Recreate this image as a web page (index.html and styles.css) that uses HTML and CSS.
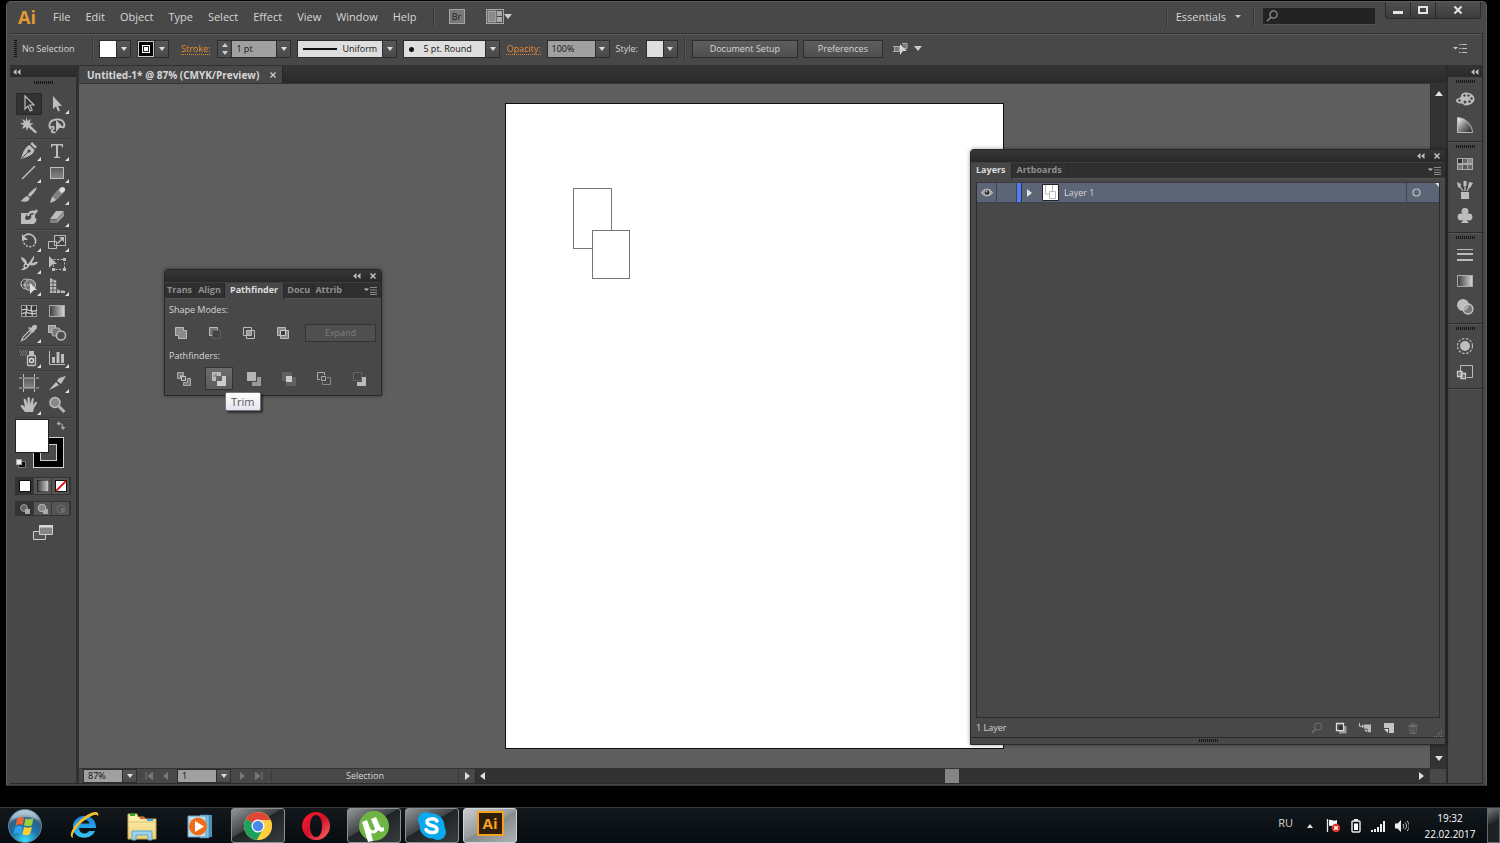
FILE: index.html
```html
<!DOCTYPE html>
<html lang="en">
<head>
    <meta charset="UTF-8">
    <meta name="viewport" content="width=device-width, initial-scale=1.0">
    <title>Untitled-1* @ 87% (CMYK/Preview)</title>
    <link rel="stylesheet" href="styles.css">
</head>
<body>
    <!-- shared gradients -->
    <svg class="defs" aria-hidden="true">
        <defs>
            <linearGradient id="fade" x1="0" y1="0" x2="1" y2="0"><stop offset="0" stop-color="#3a3a3a"/><stop offset="1" stop-color="#d6d6d6"/></linearGradient>
            <linearGradient id="box" x1="0" y1="0" x2="0" y2="1"><stop offset="0" stop-color="#5c5c5c"/><stop offset="1" stop-color="#868686"/></linearGradient>
            <linearGradient id="guide" x1="0" y1="0" x2="1" y2="1"><stop offset=".1" stop-color="#e0e0e0"/><stop offset=".55" stop-color="#777"/><stop offset="1" stop-color="#222"/></linearGradient>
            <radialGradient id="orb" cx=".5" cy=".95" r=".9"><stop offset="0" stop-color="#3fe0ff"/><stop offset=".45" stop-color="#1b78b0"/><stop offset=".75" stop-color="#2f5f85"/><stop offset="1" stop-color="#b4ccdb"/></radialGradient>
            <linearGradient id="ie" x1="0" y1="0" x2="0" y2="1"><stop offset="0" stop-color="#1583dd"/><stop offset="1" stop-color="#36c4f7"/></linearGradient>
            <linearGradient id="folder" x1="0" y1="0" x2="0" y2="1"><stop offset="0" stop-color="#fff3b8"/><stop offset="1" stop-color="#edcf72"/></linearGradient>
            <linearGradient id="opera" x1="0" y1="0" x2="1" y2="1"><stop offset="0" stop-color="#ff1b2d"/><stop offset=".5" stop-color="#d3122a"/><stop offset="1" stop-color="#ff6a6a"/></linearGradient>
        </defs>
    </svg>

    <div class="window">
        <header class="titlebar">
            <span class="logo">Ai</span>
            <nav class="menu">
                <a href="#">File</a>
                <a href="#">Edit</a>
                <a href="#">Object</a>
                <a href="#">Type</a>
                <a href="#">Select</a>
                <a href="#">Effect</a>
                <a href="#">View</a>
                <a href="#">Window</a>
                <a href="#">Help</a>
            </nav>
            <span class="line"></span>
            <button class="bridge" aria-label="Bridge">Br</button>
            <button class="arrange" aria-label="Arrange documents">
                <svg width="18" height="15" viewBox="0 0 18 15"><rect x=".5" y=".5" width="17" height="14" fill="#474747" stroke="#a9a9a9"/><rect x="2" y="2" width="8" height="11" fill="#8a8a8a" stroke="#ccc" stroke-width=".6"/><path d="M11 2h5v5h-5zM11 8h5v5h-5z" fill="#aaa"/></svg>
                <i class="caret"></i>
            </button>
            <div class="title-right">
                <span class="line"></span>
                <button class="essentials">Essentials <i class="caret small"></i></button>
                <span class="line"></span>
                <div class="search">
                    <svg width="12" height="12" viewBox="0 0 12 12" fill="none" stroke="#8e8e8e" stroke-width="1.3"><circle cx="7.5" cy="4.5" r="3.6"/><path d="M5 7.2L1 11"/></svg>
                    <input type="text" aria-label="Search">
                </div>
                <div class="win-buttons">
                    <button aria-label="Minimize"><svg width="10" height="10"><path d="M0 6h10v3h-10z" fill="#e4e4e4"/></svg></button>
                    <button aria-label="Maximize"><svg width="10" height="10"><path d="M1 2h8v6h-8z" fill="none" stroke="#e4e4e4" stroke-width="2"/></svg></button>
                    <button class="close" aria-label="Close"><svg width="10" height="10"><path d="M1.500 1.500l7 7M8.500 1.500l-7 7" stroke="#e4e4e4" stroke-width="2"/></svg></button>
                </div>
            </div>
        </header>

        <section class="control-bar">
            <span class="grip-v"></span>
            <span class="state">No Selection</span>
            <span class="line"></span>
            <div class="combo fill"><span class="chip white"></span><button class="drop" aria-label="Fill"></button></div>
            <div class="combo"><span class="chip ring"></span><button class="drop" aria-label="Stroke colour"></button></div>
            <a class="hot stroke-link" href="#">Stroke:</a>
            <div class="combo weight">
                <div class="spin"><button class="up" aria-label="Increase"></button><button class="down" aria-label="Decrease"></button></div>
                <input type="text" value="1 pt" aria-label="Stroke weight">
                <button class="drop" aria-label="Weights"></button>
            </div>
            <label class="combo profile"><span class="sample"></span><select aria-label="Profile"><option>Uniform</option></select><span class="drop"></span></label>
            <label class="combo brush"><span class="dot"></span><select aria-label="Brush"><option>5 pt. Round</option></select><span class="drop"></span></label>
            <a class="hot" href="#">Opacity:</a>
            <div class="combo opacity"><input type="text" value="100%" aria-label="Opacity"><button class="drop" aria-label="Opacity values"></button></div>
            <span class="style-label">Style:</span>
            <div class="combo"><span class="chip pale"></span><button class="drop" aria-label="Style"></button></div>
            <span class="line"></span>
            <button class="btn setup">Document Setup</button>
            <button class="btn prefs">Preferences</button>
            <button class="similar" aria-label="Select similar">
                <svg width="16" height="14" viewBox="0 0 16 14"><path d="M0 4.500h1M0 9.500h1" stroke="#bbb"/><rect x="1.500" y="4.500" width="5" height="5" fill="#777" stroke="#aaa"/><path d="M9 1.500h5v5h-3" fill="#777" stroke="#aaa"/><path d="M7 2l7 7H10l-3 4z" fill="#d4d4d4"/></svg>
                <i class="caret"></i>
            </button>
            <button class="bar-menu" aria-label="Menu">
                <svg width="14" height="9" viewBox="0 0 14 9"><path d="M0 3h5L2.500 5.500z" fill="#ccc"/><path d="M6 .5h1.500M6 4.500h1.500M6 8.500h1.500M8.500 .5H14M8.500 4.500H14M8.500 8.500H14" stroke="#bbb"/></svg>
            </button>
        </section>

        <div class="workspace">
            <aside class="tools">
                <div class="strip"><svg width="8" height="6"><path d="M3.500 0v6L0 3zM7.500 0v6L4 3z" fill="#bdbdbd"/></svg></div>
                <span class="grip"></span>
                <div class="tool-group">
                    <button class="active" aria-label="Selection"><svg viewBox="0 0 20 20"><path d="M6 2l9 9H10.800l2.400 5-2 1-2.300-5L6 15z" fill="#333" stroke="#bbb" stroke-width="1.200"/></svg></button>
                    <button class="more" aria-label="Direct Selection"><svg viewBox="0 0 20 20"><path d="M6 2l9 10H11l2 4.500-2 1-2-5L6 15z"/></svg></button>
                    <button aria-label="Magic Wand"><svg viewBox="0 0 20 20"><path d="M7.500 1l1 4 3.500-2-1.500 4 4.500.5-3.800 1.700L18 16l-1.500 1.500L9.200 11.200 8 15l-1.200-4L3 13l1.700-4L1 7.500 5 6.500 3 3l3.800 2z"/></svg></button>
                    <button aria-label="Lasso"><svg viewBox="0 0 20 20"><path d="M4 13c-3-3-2-9 5.500-9.500S19 9 16 12M4 11c3-1 4 1 1.500 3s1 3 3 2" fill="none" stroke="#bdbdbd" stroke-width="1.800"/><path d="M9 4l8 8H12.500l-3.500 4z"/></svg></button>
                </div>
                <div class="tool-group">
                    <button class="more" aria-label="Pen"><svg viewBox="0 0 20 20"><path d="M13 1l5 5-2 1.500L11.500 3zM10.500 4l5 5C14.500 13.500 10 15.500 2 18 4 10 6.500 6 10.500 4z"/><path d="M3 17l6-6" stroke="#444"/><circle cx="10" cy="10" r="1.600" fill="#444"/></svg></button>
                    <button class="more" aria-label="Type"><svg viewBox="0 0 20 20"><path d="M4 3h12v3.500h-1L14.500 4.500H11v11l2 .5v1H7v-1l2-.5v-11H5.500L5 6.500H4z"/></svg></button>
                    <button class="more" aria-label="Line Segment"><svg viewBox="0 0 20 20"><path d="M3 16L16 3" stroke="#bdbdbd" stroke-width="1.400"/></svg></button>
                    <button class="more" aria-label="Rectangle"><svg viewBox="0 0 20 20"><rect x="3.500" y="4.500" width="13" height="11" style="fill:url(#box)" stroke="#bdbdbd"/></svg></button>
                    <button aria-label="Paintbrush"><svg viewBox="0 0 20 20"><path d="M18 2c-4 2-7 5-9 8l2 2c3-3 6-6 7-10zM8.500 11l2 2C10 17 6 17.500 1.500 16c2-.5 3.500-4.500 7-5z"/></svg></button>
                    <button class="more" aria-label="Pencil"><svg viewBox="0 0 20 20"><path d="M13 3l4 4-9 9-5 2 1.500-5z"/><path d="M11 5l4 4-6 6-4-4z" fill="#808080"/><circle cx="15.500" cy="4.500" r="2.600" fill="#ddd"/></svg></button>
                    <button aria-label="Blob Brush"><svg viewBox="0 0 20 20"><path d="M2 6h7c-3 3-4 7-1 7 4 0 5-3 4-5l4-1v4c3 0 1 6-2 6H2z"/><path d="M18 3l-3 4M16 5c-4-1-7 1-7 4" fill="none" stroke="#bdbdbd" stroke-width="2.500"/></svg></button>
                    <button class="more" aria-label="Eraser"><svg viewBox="0 0 20 20"><path d="M9 4h8l-7 8H3z"/><path d="M17 5v4l-7 7v-4z" fill="#999"/><path d="M3 12.500h7V16H3z" fill="#808080"/></svg></button>
                </div>
                <div class="tool-group">
                    <button class="more" aria-label="Rotate"><svg viewBox="0 0 20 20"><path d="M5 4a7 7 0 0 1 11 8" fill="none" stroke="#c0c0c0" stroke-width="1.500"/><path d="M15.500 13A7 7 0 0 1 4 8" fill="none" stroke="#c0c0c0" stroke-width="1.500" stroke-dasharray="2 1.500"/><path d="M3 2v6h6z"/></svg></button>
                    <button class="more" aria-label="Scale"><svg viewBox="0 0 20 20"><path d="M7.500 3.500h11v10h-11z" fill="#444" stroke="#bdbdbd"/><path d="M1.500 9.500h8v7h-8z" fill="none" stroke="#bdbdbd"/><path d="M10 11l4-4-2-2h5v5l-2-2-4 4z"/></svg></button>
                    <button class="more" aria-label="Width"><svg viewBox="0 0 20 20"><path d="M2 3c4 1 6 4 6 7 2 1 5-7 7-8 1 3-2 5-2 7 2 0 3-2 6-1-2 4-6 4-8 3-3 3-5 6-9 5 2-2 4-3 4-6C5 8 2 6 2 3z"/><circle cx="7" cy="12" r="2" fill="#444" stroke="#eee"/></svg></button>
                    <button aria-label="Free Transform"><svg viewBox="0 0 20 20"><path d="M6.500 5.500h11v10h-11z" fill="none" stroke="#bdbdbd" stroke-dasharray="2 1.500"/><path d="M16 4h3v3h-3zM16 14h3v3h-3zM5 14h3v3H5z"/><path d="M2 2l8 8H6l-4 4z"/></svg></button>
                    <button class="more" aria-label="Shape Builder"><svg viewBox="0 0 20 20"><circle cx="7" cy="8" r="5" fill="none" stroke="#bdbdbd"/><circle cx="11" cy="9" r="5.500" fill="#777" stroke="#bdbdbd"/><path d="M2 9h11" stroke="#ddd" stroke-dasharray="1 1"/><path d="M11 7l7 7h-3l-4 4z" fill="#ddd"/></svg></button>
                    <button class="more" aria-label="Perspective Grid"><svg viewBox="0 0 20 20"><path d="M3 2l7 3v8l8 2v2H3z"/><path d="M6 3v14M9.500 4v13M13.500 13v4M3 7h7M3 10.500h7M3 14h13" stroke="#4a4a4a" stroke-width=".8"/></svg></button>
                </div>
                <div class="tool-group">
                    <button aria-label="Mesh"><svg viewBox="0 0 20 20"><rect x="2.500" y="4.500" width="15" height="11" fill="#333" stroke="#999"/><path d="M3 9c5-3 10 4 15 0M3 13c5-4 9 2 14-1M7 5c3 4-2 7 0 10M13 5c-3 3 2 7 0 10" fill="none" stroke="#ccc" stroke-width="1.300"/></svg></button>
                    <button aria-label="Gradient"><svg viewBox="0 0 20 20"><rect x="2.500" y="4.500" width="15" height="11" style="fill:url(#fade)" stroke="#aaa"/></svg></button>
                    <button class="more" aria-label="Eyedropper"><svg viewBox="0 0 20 20"><path d="M12 5c2-4 6-4 6-1s-3 3-3 5l-1 1-5-5 1-1z"/><path d="M10.500 7.500l2 2L6 16l-3.500 1.500L4 14z" fill="none" stroke="#bdbdbd" stroke-width="1.200"/></svg></button>
                    <button aria-label="Blend"><svg viewBox="0 0 20 20"><rect x="1.500" y="2.500" width="7" height="7" fill="#999" stroke="#bbb"/><rect x="5" y="5" width="8" height="8" rx="2" fill="#777" stroke="#bbb"/><circle cx="14" cy="12.500" r="4.500" fill="#4c4c4c" stroke="#bbb" stroke-width="1.500"/></svg></button>
                </div>
                <div class="tool-group">
                    <button class="more" aria-label="Symbol Sprayer"><svg viewBox="0 0 20 20"><rect x="8.500" y="7.500" width="8" height="10" rx="1" fill="#555" stroke="#c0c0c0" stroke-width="1.300"/><path d="M10 3h5v4h-5z"/><circle cx="12.500" cy="12.500" r="2" fill="none" stroke="#ddd" stroke-width="1.300"/><path d="M1 3h8M2 5h7M1 7h6" stroke="#aaa" stroke-dasharray="1 1.500"/></svg></button>
                    <button class="more" aria-label="Column Graph"><svg viewBox="0 0 20 20"><path d="M2.500 3v13.500H18" fill="none" stroke="#bdbdbd"/><path d="M5 9h3v6H5zM9.500 4h3v11h-3zM14 6h3v9h-3z"/></svg></button>
                </div>
                <div class="tool-group">
                    <button aria-label="Artboard"><svg viewBox="0 0 20 20"><rect x="4.500" y="5" width="11" height="10" style="fill:url(#box)" stroke="#bdbdbd"/><path d="M4.500 1v3M15.500 1v3M4.500 16v3M15.500 16v3M0 5h3M17 5h3M0 15h3M17 15h3" stroke="#bdbdbd"/></svg></button>
                    <button class="more" aria-label="Slice"><svg viewBox="0 0 20 20"><path d="M19 3l-7 2-2 3 4 3zM9 9l3 3c-3 2-6 3-10 5z"/></svg></button>
                    <button class="more" aria-label="Hand"><svg viewBox="0 0 20 20"><path d="M6 17C4 14 1 12 2 10c2-.5 3 1 4 2L4.500 4.500c1-1.500 2-.5 2.500.5l1.500 4V3c.5-1.500 2-1.500 2.300 0l.5 6L13 3.500c1-1 2-.5 1.800.7L14 10l2.500-3c1.500-.6 2 .5 1.200 1.800L15 13l-1 4z"/></svg></button>
                    <button aria-label="Zoom"><svg viewBox="0 0 20 20"><circle cx="8" cy="7.500" r="5" fill="#888" stroke="#c0c0c0" stroke-width="1.500"/><path d="M12 11.500l5.500 5.500" stroke="#b5b5b5" stroke-width="3"/></svg></button>
                </div>
                <svg class="swatches" width="52" height="52" viewBox="0 0 52 52">
                    <rect x="18.500" y="18.500" width="30" height="30" fill="#000" stroke="#d0d0d0"/>
                    <rect x="25.500" y="25.500" width="16" height="16" fill="#4a4a4a" stroke="#d0d0d0"/>
                    <rect x=".5" y=".5" width="33" height="33" fill="#fff" stroke="#222"/>
                    <path d="M44 4.500c3 0 4 1 4 4" fill="none" stroke="#aaa" stroke-width="1.200"/><path d="M41.500 4.500l3-2.500v5zM45.500 8h5L48 11z" fill="#aaa"/>
                    <path d="M3.500 42.500h7v6h-7z" fill="#111" stroke="#777"/><path d="M1.500 40.500h5v5h-5z" fill="#eee" stroke="#aaa"/>
                </svg>
                <div class="modes">
                    <button class="on" aria-label="Color"><svg width="12" height="12"><path d="M0 0h12v12H0z" fill="#111"/><path d="M1 1h10v10H1z" fill="#fff"/></svg></button>
                    <button aria-label="Gradient fill"><svg width="12" height="12"><rect width="12" height="12" style="fill:url(#fade)" stroke="#111"/></svg></button>
                    <button aria-label="None"><svg width="12" height="12"><path d="M0 0h12v12H0z" fill="#111"/><path d="M1 1h10v10H1z" fill="#fff"/><path d="M1 11L11 1" stroke="#e8131b" stroke-width="1.800"/></svg></button>
                </div>
                <div class="modes draw">
                    <button class="on" aria-label="Draw Normal"><svg width="12" height="12"><circle cx="5" cy="5" r="3.500" fill="#666" stroke="#999"/><path d="M6 6h5v5H6z" fill="#aaa"/></svg></button>
                    <button aria-label="Draw Behind"><svg width="12" height="12"><path d="M6 6h5v5H6z" fill="#aaa"/><circle cx="5" cy="5" r="3.800" fill="#888" stroke="#bbb"/></svg></button>
                    <button aria-label="Draw Inside"><svg width="12" height="12"><circle cx="6" cy="6" r="4" fill="none" stroke="#6c6c6c"/><path d="M6 5h3v4H6z" fill="#6c6c6c"/></svg></button>
                </div>
                <button class="screen-mode" aria-label="Screen Mode"><svg width="20" height="15" viewBox="0 0 20 15"><path d="M.5 6.500h12v8H.5z" fill="#555" stroke="#ccc"/><path d="M6.500 .5h13v9h-13z" fill="#858585" stroke="#ccc"/><path d="M6 1.500h14" stroke="#ddd" stroke-width="2"/></svg></button>
            </aside>

            <main class="document">
                <div class="doc-tabs">
                    <div class="doc-tab">Untitled-1* @ 87% (CMYK/Preview) <button aria-label="Close tab"><svg width="6" height="6"><path d="M.5 .5l5 5M5.500 .5l-5 5" stroke="#ccc" stroke-width="1.300"/></svg></button></div>
                </div>
                <div class="stage">
                    <div class="canvas">
                        <div class="artboard">
                            <svg class="art" width="58" height="92" viewBox="0 0 58 92"><rect x=".5" y=".5" width="38" height="60" fill="#fff" stroke="#777"/><rect x="19.500" y="42.500" width="37" height="48" fill="#fff" stroke="#777"/></svg>
                        </div>
                    </div>
                    <div class="v-scroll"><i class="tri up"></i><i class="tri down"></i></div>
                </div>
                <footer class="status">
                    <div class="combo zoom"><input type="text" value="87%" aria-label="Zoom level"><button class="drop" aria-label="Zoom values"></button></div>
                    <div class="nav">
                        <button aria-label="First"><svg width="8" height="8"><path d="M1 0v8M8 0v8L3 4z" fill="#777" stroke="#777"/></svg></button>
                        <button aria-label="Previous"><svg width="8" height="8"><path d="M7 0v8L2 4z" fill="#777"/></svg></button>
                    </div>
                    <div class="combo zoom"><input type="text" value="1" aria-label="Artboard number"><button class="drop" aria-label="Artboards"></button></div>
                    <div class="nav">
                        <button aria-label="Next"><svg width="8" height="8"><path d="M1 0v8L6 4z" fill="#777"/></svg></button>
                        <button aria-label="Last"><svg width="8" height="8"><path d="M0 0v8L5 4zM7 0v8" fill="#777" stroke="#777"/></svg></button>
                    </div>
                    <div class="status-text">Selection</div>
                    <button class="status-more" aria-label="Show"><i class="tri right"></i></button>
                    <div class="h-scroll"><i class="tri left"></i><span class="thumb"></span><i class="tri right"></i></div>
                    <span class="corner"></span>
                </footer>

                <section class="panel pathfinder">
                    <div class="panel-head">
                        <button aria-label="Collapse"><svg width="8" height="6"><path d="M3.500 0v6L0 3zM7.500 0v6L4 3z" fill="#bdbdbd"/></svg></button>
                        <button aria-label="Close panel"><svg width="6" height="6"><path d="M.5 .5l5 5M5.500 .5l-5 5" stroke="#ccc" stroke-width="1.300"/></svg></button>
                    </div>
                    <div class="panel-tabs">
                        <button class="cut">Trans</button>
                        <button class="cut">Align</button>
                        <button class="open">Pathfinder</button>
                        <button class="cut">Docu</button>
                        <button class="cut">Attrib</button>
                        <button class="panel-menu" aria-label="Panel menu"><svg width="13" height="8"><path d="M0 1.500h5L2.500 4z" fill="#bbb"/><path d="M6 .5h7M6 3h7M6 5.500h7M6 7.500h7" stroke="#888"/></svg></button>
                    </div>
                    <div class="panel-body">
                        <h3>Shape Modes:</h3>
                        <div class="shape-row">
                            <button aria-label="Unite"><svg viewBox="0 0 14 14"><path d="M1.500 1.500h8v3h3v8h-8v-3h-3z" fill="#8a8a8a" stroke="#bbb"/></svg></button>
                            <button aria-label="Minus Front"><svg viewBox="0 0 14 14"><path d="M1.500 1.500h8v3h-5v5h-3z" fill="#777" stroke="#bbb"/><path d="M4.500 4.500h8v8h-8z" fill="#444" stroke="#5f5f5f"/></svg></button>
                            <button aria-label="Intersect"><svg viewBox="0 0 14 14"><path d="M1.500 1.500h8v8h-8zM4.500 4.500h8v8h-8z" fill="none" stroke="#bbb"/><path d="M5 5h4v4H5z" fill="#999"/></svg></button>
                            <button aria-label="Exclude"><svg viewBox="0 0 14 14"><path d="M1.500 1.500h8v8h-8zM4.500 4.500h8v8h-8z" fill="#888" stroke="#bbb"/><path d="M4.500 4.500h5v5h-5z" fill="#3c3c3c" stroke="#ccc"/></svg></button>
                            <button class="btn expand" disabled>Expand</button>
                        </div>
                        <h3>Pathfinders:</h3>
                        <div class="finder-row">
                            <button aria-label="Divide"><svg viewBox="0 0 14 14"><path d="M.5 .5h6v3h-3v3h-3zM13.500 13.500h-7v-3h4v-4h3z" fill="#777" stroke="#aaa"/><path d="M4.500 4.500h4v4h-4z" fill="#555" stroke="#ccc"/></svg></button>
                            <button class="active" aria-label="Trim"><svg viewBox="0 0 14 14"><path d="M0 0h9v4H4v5H0z" fill="#bbb"/><path d="M5 9h5V4h4v10H5z" fill="#ccc"/><path d="M4 1v3H1" fill="none" stroke="#777"/></svg></button>
                            <button aria-label="Merge"><svg viewBox="0 0 14 14"><path d="M0 0h9v9H0z" fill="#b5b5b5"/><path d="M5 10h5V5h4v9H5z" fill="#999"/></svg></button>
                            <button aria-label="Crop"><svg viewBox="0 0 14 14"><path d="M0 0h10v9H0zM4 5h10v9H4z" fill="#606060"/><path d="M4 4h6v6H4z" fill="#ccc"/></svg></button>
                            <button aria-label="Outline"><svg viewBox="0 0 14 14"><path d="M3 7.500H.5v-7h7V3M4.500 8.500v-4h4v4z" fill="none" stroke="#aaa"/><path d="M10 5.500h3.500v7h-8V10" fill="none" stroke="#888"/></svg></button>
                            <button aria-label="Minus Back"><svg viewBox="0 0 14 14"><path d="M1.500 .5h8v8h-8z" fill="#444" stroke="#666"/><path d="M5 10h5V5h4v9H5z" fill="#bbb"/></svg></button>
                        </div>
                    </div>
                    <div class="tooltip">Trim</div>
                </section>

                <section class="panel layers">
                    <div class="panel-head">
                        <button aria-label="Collapse"><svg width="8" height="6"><path d="M3.500 0v6L0 3zM7.500 0v6L4 3z" fill="#bdbdbd"/></svg></button>
                        <button aria-label="Close panel"><svg width="6" height="6"><path d="M.5 .5l5 5M5.500 .5l-5 5" stroke="#ccc" stroke-width="1.300"/></svg></button>
                    </div>
                    <div class="panel-tabs">
                        <button class="open">Layers</button>
                        <button>Artboards</button>
                        <button class="panel-menu" aria-label="Panel menu"><svg width="13" height="8"><path d="M0 1.500h5L2.500 4z" fill="#bbb"/><path d="M6 .5h7M6 3h7M6 5.500h7M6 7.500h7" stroke="#888"/></svg></button>
                    </div>
                    <div class="layer-list">
                        <div class="layer">
                            <button class="cell" aria-label="Visibility"><svg width="12" height="9" viewBox="0 0 12 9"><path d="M.5 4.500C3 0 9 0 11.500 4.500 9 9 3 9 .5 4.500z" fill="#a5a5a5" stroke="#c5c5c5"/><circle cx="6" cy="4.500" r="2.300" fill="#2c2c2c"/><circle cx="5.500" cy="3.800" r=".8" fill="#eee"/></svg></button>
                            <span class="cell"></span>
                            <span class="color"></span>
                            <i class="tri right"></i>
                            <svg class="thumbnail" width="17" height="17"><path d="M.5 .5h16v16H.5z" fill="#fff" stroke="#222"/><path d="M3.500 1v9h4M10.500 1v6M7.500 7.500h6v7h-6z" fill="none" stroke="#bbb"/></svg>
                            <span class="layer-name">Layer 1</span>
                            <button class="target" aria-label="Target"><svg width="9" height="9"><circle cx="4.500" cy="4.500" r="3.500" fill="none" stroke="#c0c0c0" stroke-width="1.200"/></svg></button>
                        </div>
                    </div>
                    <div class="layers-foot">
                        <span>1 Layer</span>
                        <div class="foot-icons">
                            <button aria-label="Locate Object"><svg viewBox="0 0 12 12"><circle cx="7" cy="4.500" r="3.600" fill="none" stroke="#707070"/><path d="M4.500 7L1 11" stroke="#707070" stroke-width="1.500"/></svg></button>
                            <button aria-label="Clipping Mask"><svg viewBox="0 0 12 12"><path d="M4 4h7.500v7.500H4z" fill="#999"/><path d="M1.500 1.500h7v7h-7z" fill="none" stroke="#ddd" stroke-width="1.300"/><path d="M4 4h4v4H4z" fill="#333"/></svg></button>
                            <button aria-label="New Sublayer"><svg viewBox="0 0 14 12"><path d="M6 2h8v9h-4V7H6z" fill="#bbb"/><path d="M6 8h3v3z" fill="#ddd"/><path d="M.5 0v4h5M3.500 2l2 2-2 2" fill="none" stroke="#ddd"/></svg></button>
                            <button aria-label="New Layer"><svg viewBox="0 0 12 12"><path d="M1 1h10v10H6V6H1z" fill="#c4c4c4"/><path d="M1 7h4v4z" fill="#ddd"/></svg></button>
                            <button aria-label="Delete"><svg viewBox="0 0 12 12"><path d="M1 3.500h10M4.500 3V1.500h3V3M2.500 4.500h7l-.5 7H3zM5 5v6M7 5v6" fill="none" stroke="#6a6a6a"/></svg></button>
                        </div>
                        <svg class="resize" width="9" height="9"><path d="M0 8.500h9M3 6.500h6M5 4.500h4M7 2.500h2" stroke="#777" stroke-dasharray="1 1"/></svg>
                    </div>
                    <div class="panel-edge"><span class="grip"></span></div>
                </section>
            </main>

            <aside class="dock">
                <div class="strip"><svg width="8" height="6"><path d="M3.500 0v6L0 3zM7.500 0v6L4 3z" fill="#bdbdbd"/></svg></div>
                <div class="dock-group">
                    <span class="grip"></span>
                    <button aria-label="Color"><svg viewBox="0 0 20 20"><path d="M11 3.500c5 0 8.500 3 8.500 6.500s-4 6.500-9 6.500c-2 0-2-2-4-2S1 14 1 11.500C1 9 6 9 6 7.500S7 3.500 11 3.500z"/><g fill="#444"><circle cx="4.500" cy="11.500" r="1.300"/><circle cx="9.500" cy="6.500" r="1.200"/><circle cx="13.500" cy="6.500" r="1.200"/><circle cx="16.500" cy="9.500" r="1.200"/><circle cx="14.500" cy="12.500" r="1.300"/><circle cx="10" cy="13" r="1.500"/></g></svg></button>
                    <button aria-label="Color Guide"><svg viewBox="0 0 20 20"><path d="M2.500 2.500C10 3 17 9 17.500 17.500h-15z" style="fill:url(#guide)" stroke="#bbb"/></svg></button>
                </div>
                <div class="dock-group">
                    <span class="grip"></span>
                    <button aria-label="Swatches"><svg viewBox="0 0 20 20"><path d="M2 4h16v12H2z" fill="#aaa"/><path d="M3 5h4v4H3z" fill="#333"/><path d="M8 5h4v4H8z" fill="#666"/><path d="M13 5h4v4h-4z" fill="#888"/><path d="M3 11h4v4H3z" fill="#777"/><path d="M8 11h4v4H8z" fill="#555"/><path d="M13 11h4v4h-4z" fill="#666"/></svg></button>
                    <button aria-label="Brushes"><svg viewBox="0 0 20 20"><path d="M6 12h8v7H6z"/><path d="M8 11L4 5M10 11V4M12 11l3-6" stroke="#bdbdbd" stroke-width="1.200"/><path d="M2 2l4 2-1 4-2-1zM8.500 1h3v5h-3zM14 2l4 1-3 5-2-1z"/></svg></button>
                    <button aria-label="Symbols"><svg viewBox="0 0 20 20"><circle cx="10" cy="5.500" r="3.400"/><circle cx="6" cy="11" r="3.400"/><circle cx="14" cy="11" r="3.400"/><path d="M9 8h2c0 5 1 7 3 9H6c2-2 3-4 3-9z"/></svg></button>
                </div>
                <div class="dock-group">
                    <span class="grip"></span>
                    <button aria-label="Stroke"><svg viewBox="0 0 20 20"><path d="M2 4.500h16" stroke="#bbb"/><path d="M2 9h16M2 15h16" stroke="#bbb" stroke-width="2"/></svg></button>
                    <button aria-label="Gradient panel"><svg viewBox="0 0 20 20"><rect x="2.500" y="4.500" width="15" height="11" style="fill:url(#fade)" stroke="#aaa"/></svg></button>
                    <button aria-label="Transparency"><svg viewBox="0 0 20 20"><circle cx="8" cy="8" r="6"/><circle cx="13" cy="12" r="5" fill="#999" fill-opacity=".6" stroke="#c5c5c5" stroke-width="1.300"/></svg></button>
                </div>
                <div class="dock-group">
                    <span class="grip"></span>
                    <button aria-label="Appearance"><svg viewBox="0 0 20 20"><circle cx="10" cy="10" r="5"/><circle cx="10" cy="10" r="7.500" fill="none" stroke="#bdbdbd" stroke-width="1.200" stroke-dasharray="2.500 1.500"/></svg></button>
                    <button aria-label="Graphic Styles"><svg viewBox="0 0 20 20"><path d="M5.500 9V3.500h12v12H12" fill="none" stroke="#bbb"/><path d="M6 11.500h4.500v5H6zM2.500 9.500H7v5H2.500z" fill="#666" stroke="#ccc" stroke-width="1.300"/></svg></button>
                </div>
            </aside>
        </div>
    </div>

    <footer class="taskbar">
        <button class="start" aria-label="Start">
            <svg width="36" height="36" viewBox="0 0 36 36"><circle cx="18" cy="18" r="16.500" style="fill:url(#orb)" stroke="#5e7f93"/><path d="M10 11c2-2 5-2 7-1l-1.500 7c-2-1-5-1-7 1z" fill="#f0652f"/><path d="M18.500 10.500c3 1 6 1 8-.5L25 17c-2 1.500-5 1.500-8 .5z" fill="#9bcf3c"/><path d="M8 19.500c2-1.500 5-2 7.500-.8L14 25.500c-2.500-1-5-1-7.500 1z" fill="#2fa3ea"/><path d="M17 19c2.500 1 5.500 1 8 0l-2 7c-2 1.500-5 1.500-7.500.3z" fill="#ffd02e"/><path d="M4 12C8 2 28 2 32 12 24 8 12 8 4 12z" fill="#fff" opacity=".3"/></svg>
        </button>
        <div class="apps">
            <button aria-label="Internet Explorer"><svg width="34" height="34" viewBox="0 0 34 34"><path d="M29 19H12c0 6 8 7 10 3h6c-4 10-22 9-22-4C6 4 29 2 29 19zM12.500 14.500h10c-1-5-9-5-10 0z" fill-rule="evenodd" style="fill:url(#ie)"/><path d="M6 29c-6-2 2-15 11-21S33 1 31 8c0-4-6-2-13 3S4 25 6 29z" fill="#f4bd2c"/></svg></button>
            <button aria-label="Explorer"><svg width="34" height="34" viewBox="0 0 34 34"><path d="M3 5h9l1 3h6l1 2h11v20H3z" style="fill:url(#folder)" stroke="#c9a850"/><path d="M5 6h5" stroke="#24b33a" stroke-width="2"/><path d="M15 9h5" stroke="#e9622c" stroke-width="2"/><path d="M22 11h6" stroke="#36a1e8" stroke-width="2"/><path d="M3 13h28" stroke="#e0c268"/><path d="M7 31v-9h20v9h-4v-5H11v5z" fill="#9bd2ec" stroke="#5fa6cc"/></svg></button>
            <button aria-label="Media Player"><svg width="34" height="34" viewBox="0 0 34 34"><path d="M20 6h9v22h-9z" fill="#4b92bd"/><path d="M17 6h9v23h-9z" fill="#87c1df" stroke="#3d7ea6" stroke-width=".6"/><path d="M5 7h18v21H5z" fill="#bfe0ef" stroke="#5c9dc0"/><circle cx="15" cy="17.500" r="9" fill="#ef6c1a"/><path d="M12 12v11l9-5.500z" fill="#fff"/></svg></button>
            <button class="running" aria-label="Chrome"><svg width="30" height="30" viewBox="0 0 30 30"><circle cx="15" cy="15" r="14" fill="#ffcd40"/><path d="M15 15L2.900 8A14 14 0 0 1 27.500 9z" fill="#e04537"/><path d="M15 15L2.900 8A14 14 0 0 0 14 29l6-11z" fill="#1aa15f"/><path d="M15 9h12.500A14 14 0 0 1 14 29l6.500-11z" fill="#ffcd40"/><circle cx="15" cy="15" r="6.500" fill="#fff"/><circle cx="15" cy="15" r="5.200" fill="#4a87ee"/></svg></button>
            <button aria-label="Opera"><svg width="30" height="30" viewBox="0 0 30 30"><path d="M15 1a14 14 0 1 0 .1 0zM15 4c4 0 6 5 6 11s-2 11-6 11-6-5-6-11 2-11 6-11z" fill-rule="evenodd" style="fill:url(#opera)"/></svg></button>
            <button class="running" aria-label="uTorrent"><svg width="32" height="32" viewBox="0 0 32 32"><circle cx="16" cy="16" r="15" fill="#6fb544"/><path d="M4 12l5-2 3 8c1 3 4 3 5 1l-4-10 5-2 4 9c1 2 3 2 4 1v4c-2 1-4 1-6-1-1 3-4 4-7 3l2 8-5 1z" fill="#fff"/></svg></button>
            <button class="running" aria-label="Skype"><svg width="30" height="30" viewBox="0 0 30 30"><circle cx="9" cy="9" r="8" fill="#0aa9ee"/><circle cx="21" cy="21" r="8" fill="#0aa9ee"/><circle cx="15" cy="15" r="12.500" fill="#0aa9ee"/><path d="M20 10c-2-3-10-3-10 1 0 5 10 2 10 7.500 0 4-9 4-11 0" fill="none" stroke="#fff" stroke-width="3.500" stroke-linecap="round"/></svg></button>
            <button class="running current" aria-label="Illustrator"><span class="ai-tile">Ai</span></button>
        </div>
        <div class="tray">
            <span class="lang">RU</span>
            <i class="tri up"></i>
            <svg class="flag" width="15" height="15" viewBox="0 0 15 15"><path d="M1.500 1v13" stroke="#eee" stroke-width="1.300"/><path d="M3 2c3-1 4 2 8 0v6c-4 2-5-1-8 0z" fill="#f4f4f4"/><circle cx="10" cy="10" r="4.300" fill="#da2f2a"/><path d="M8.200 8.200l3.600 3.600M11.800 8.200l-3.600 3.600" stroke="#fff" stroke-width="1.400"/></svg>
            <svg width="10" height="14" viewBox="0 0 10 14"><path d="M3 0h4v2H3z" fill="#eee"/><rect x="1" y="2" width="8" height="11" rx="1" fill="none" stroke="#eee" stroke-width="1.400"/><path d="M3 4.500h4V11H3z" fill="#fff"/></svg>
            <svg width="14" height="12" viewBox="0 0 14 12"><path d="M0 10h2v2H0zM3 9h2v3H3zM6 7h2v5H6zM9 4h2v8H9zM12 1h2v11h-2z" fill="#eee"/></svg>
            <svg width="14" height="14" viewBox="0 0 14 14"><path d="M0 4.500h2.500L6 1v12L2.500 9.500H0z" fill="#eee"/><path d="M8 5c1 1.500 1 3 0 4.500M10 3.500c2 2 2 5 0 7M12 2c3 3 3 7 0 10" fill="none" stroke="#ccc"/></svg>
            <div class="clock"><time>19:32</time><span>22.02.2017</span></div>
            <button class="peek" aria-label="Show desktop"></button>
        </div>
    </footer>
</body>
</html>
```

FILE: styles.css
```css
* {
    box-sizing: border-box;
}

body {
    margin: 0;
    height: 100vh;
    display: flex;
    flex-direction: column;
    background: #000;
    color: #d6d6d6;
    font-family: "Open Sans", "Noto Sans", sans-serif;
    font-size: 9px;
    line-height: 12px;
    overflow: hidden;
}

button, input, select {
    font: inherit;
    color: inherit;
    margin: 0;
    padding: 0;
    border: none;
    outline: none;
    background: none;
}

button {
    display: flex;
    align-items: center;
    justify-content: center;
}

a {
    color: inherit;
    text-decoration: none;
}

svg {
    display: block;
    flex: none;
}

.defs {
    position: absolute;
    width: 0;
    height: 0;
}

/* small arrows */
.caret {
    border: 4px solid transparent;
    border-top: 5px solid #ccc;
    border-bottom: 0;
}

.caret.small {
    border-width: 3px;
    border-bottom: 0;
}

.tri {
    border: 4px solid transparent;
    flex: none;
}

.tri.up {
    border-top: 0;
    border-bottom: 5px solid #e0e0e0;
}

.tri.down {
    border-bottom: 0;
    border-top: 5px solid #e0e0e0;
}

.tri.left {
    border-left: 0;
    border-right: 5px solid #e0e0e0;
}

.tri.right {
    border-right: 0;
    border-left: 5px solid #e0e0e0;
}

.line {
    width: 2px;
    height: 20px;
    background: #383838;
    border-right: 1px solid #565656;
}

.grip {
    display: block;
    width: 19px;
    height: 3px;
    background: repeating-linear-gradient(90deg, #161616 0 1px, #444 1px 2px);
}

.grip-v {
    width: 3px;
    height: 18px;
    background: repeating-linear-gradient(#161616 0 1px, #444 1px 2px);
}

/* window */
.window {
    flex: 1;
    min-height: 0;
    display: flex;
    flex-direction: column;
    margin: 1px 13px 21px 6px;
    border: 1px solid #5c5c5c;
    border-bottom-color: #333;
    border-radius: 5px 5px 0 0;
    background: #484848;
    padding-bottom: 1px;
}

.titlebar {
    height: 31px;
    display: flex;
    align-items: center;
    padding: 0 0 2px 11px;
}

.logo {
    width: 35px;
    color: #e19b32;
    font: bold 18px/20px "Open Sans", sans-serif;
}

.menu {
    display: flex;
    gap: 15px;
    margin-right: 16px;
    font-size: 11px;
    line-height: 16px;
}

.bridge {
    width: 16px;
    height: 15px;
    margin: 0 21px 0 14px;
    border: 1px solid #a5a5a5;
    background: #777;
    color: #222;
}

.title-right {
    margin-left: auto;
    align-self: stretch;
    display: flex;
    align-items: center;
}

.essentials {
    gap: 9px;
    margin: 0 12px 0 8px;
    font-size: 11px;
    line-height: 16px;
}

.search {
    display: flex;
    align-items: center;
    width: 112px;
    height: 17px;
    margin: 0 10px 0 8px;
    padding-left: 3px;
    background: #232323;
    border-bottom: 1px solid #555;
}

.search input {
    width: 90px;
}

.win-buttons {
    display: flex;
    align-self: flex-start;
    height: 17px;
    margin-right: 5px;
    border: 1px solid #2b2b2b;
    border-top: 0;
    border-radius: 0 0 3px 3px;
    background: linear-gradient(#505050, #3c3c3c);
}

.win-buttons button {
    width: 25px;
    border-right: 1px solid #2b2b2b;
}

.win-buttons .close {
    width: 44px;
    border-right: 0;
}

/* control bar */
.control-bar {
    display: flex;
    align-items: center;
    height: 33px;
    margin: 0 3px;
    padding: 0 15px 2px 4px;
    border: 1px solid #303030;
    border-left: 0;
    box-shadow: inset 0 1px #585858;
}

.control-bar .line {
    height: 23px;
}

.state {
    width: 70px;
    margin-left: 5px;
}

.combo {
    display: flex;
    height: 18px;
    border: 1px solid #2d2d2d;
    margin-right: 6px;
}

.combo input {
    width: 44px;
    padding-left: 4px;
    background: #a0a0a0;
    color: #111;
}

.combo select {
    appearance: none;
    background: transparent;
    color: #111;
}

.drop {
    width: 14px;
    display: flex;
    align-items: center;
    justify-content: center;
    border-left: 1px solid #2d2d2d;
    background: linear-gradient(#585858, #4a4a4a);
}

.drop::after {
    content: "";
    border: 3px solid transparent;
    border-top: 4px solid #dcdcdc;
    border-bottom: 0;
}

.fill {
    margin-left: 5px;
}

.chip {
    width: 16px;
}

.chip.white {
    background: #fff;
}

.chip.pale {
    background: #dedede;
}

.chip.ring {
    background: #fff;
    border: 4px solid #000;
    outline: 1px solid #ccc;
    outline-offset: -1px;
    box-shadow: inset 0 0 0 1px #fff, inset 0 0 0 2px #222;
}

.hot {
    color: #df8b33;
    line-height: 11px;
    border-bottom: 1px dotted #df8b33;
}

.stroke-link {
    margin: 0 7px 0 6px;
}

.spin {
    width: 14px;
    border-right: 1px solid #2d2d2d;
    background: #505050;
}

.spin button {
    width: 13px;
    height: 8px;
}

.spin button::after {
    content: "";
    border: 3px solid transparent;
}

.spin .up::after {
    border-top: 0;
    border-bottom: 4px solid #ccc;
}

.spin .down::after {
    border-bottom: 0;
    border-top: 4px solid #ccc;
}

.profile, .brush {
    align-items: stretch;
    background: #dedede;
}

.profile {
    width: 100px;
}

.brush {
    width: 97px;
}

.profile select, .brush select {
    flex: 1;
    min-width: 0;
}

.sample {
    width: 34px;
    height: 2px;
    margin: 7px 5px 0;
    background: #111;
}

.dot {
    width: 5px;
    height: 5px;
    margin: 6px 9px 0 5px;
    border-radius: 50%;
    background: #111;
}

.opacity {
    margin-left: 6px;
}

.opacity input {
    width: 47px;
}

.style-label {
    margin-right: 8px;
}

.btn {
    height: 18px;
    border: 1px solid #2d2d2d;
    background: linear-gradient(#5e5e5e, #4f4f4f);
}

.setup {
    width: 106px;
    margin: 0 5px 0 6px;
}

.prefs {
    width: 80px;
}

.similar {
    gap: 5px;
    margin-left: 10px;
}

.bar-menu {
    margin-left: auto;
}

/* workspace */
.workspace {
    flex: 1;
    min-height: 0;
    display: flex;
    margin: 0 3px;
    border-bottom: 1px solid #2b2b2b;
}

.strip {
    height: 11px;
    display: flex;
    align-items: center;
    align-self: stretch;
    padding: 0 3px;
    background: linear-gradient(#333, #292929);
}

.tools {
    width: 69px;
    display: flex;
    flex-direction: column;
    align-items: center;
    border-right: 3px solid #303030;
}

.tools > .grip {
    margin: 4px 0 8px;
}

.tool-group {
    display: grid;
    grid-template-columns: 26px 26px;
    gap: 0 2px;
    padding: 1px;
    border-bottom: 1px solid #393939;
    box-shadow: 0 1px #525252;
}

.tool-group button {
    position: relative;
    height: 22px;
}

.tool-group svg {
    width: 20px;
    height: 20px;
    fill: #bdbdbd;
}

.tool-group .active {
    background: #333;
    border: 1px solid #292929;
}

.more::after {
    content: "";
    position: absolute;
    right: 1px;
    bottom: 1px;
    border: 2px solid transparent;
    border-right-color: #ddd;
    border-bottom-color: #ddd;
}

.swatches {
    align-self: flex-start;
    margin: 1px 0 6px 5px;
}

.modes {
    display: flex;
    border: 1px solid #333;
    background: #555;
}

.modes button {
    width: 18px;
    height: 16px;
    border-right: 1px solid #383838;
}

.modes .on {
    background: #333;
}

.draw {
    margin: 6px 0 9px;
}

.draw button {
    height: 13px;
}

.document {
    position: relative;
    flex: 1;
    min-width: 0;
    display: flex;
    flex-direction: column;
}

.doc-tabs {
    height: 18px;
    display: flex;
    background: linear-gradient(#353535, #2a2a2a);
    border-bottom: 1px solid #333;
}

.doc-tab {
    display: flex;
    align-items: center;
    gap: 11px;
    padding: 0 6px 0 8px;
    background: #484848;
    border-right: 1px solid #262626;
    font-size: 10px;
    font-weight: 700;
}

.stage {
    flex: 1;
    min-height: 0;
    display: flex;
}

.canvas {
    flex: 1;
    display: flex;
    justify-content: center;
    padding: 19px 0;
    background: #5e5e5e;
}

.artboard {
    width: 37%;
    background: #fff;
    border: 1px solid #111;
    padding: 84px 67px;
}

.v-scroll {
    width: 16px;
    display: flex;
    flex-direction: column;
    align-items: center;
    justify-content: space-between;
    padding: 7px 0;
    background: #333;
    border-left: 1px solid #2a2a2a;
}

.status {
    height: 15px;
    display: flex;
    align-items: center;
    padding-left: 4px;
    background: #484848;
    border-top: 1px solid #333;
}

.zoom {
    height: 14px;
    margin: 0;
}

.zoom input {
    width: 38px;
}

.nav {
    display: flex;
    justify-content: center;
    gap: 8px;
    width: 40px;
}

.status-text {
    width: 187px;
    text-align: center;
    border-left: 1px solid #3a3a3a;
}

.status-more {
    width: 18px;
    height: 14px;
    border-left: 1px solid #3a3a3a;
    border-right: 1px solid #2a2a2a;
}

.h-scroll {
    flex: 1;
    display: flex;
    align-items: center;
    justify-content: space-between;
    height: 14px;
    padding: 0 6px 0 4px;
    background: #323232;
}

.thumb {
    width: 14px;
    height: 14px;
    background: #858585;
}

.corner {
    width: 16px;
}

.dock {
    width: 37px;
    border-left: 2px solid #2b2b2b;
    border-right: 1px solid #2b2b2b;
}

.dock .strip {
    justify-content: flex-end;
}

.dock-group {
    display: flex;
    flex-direction: column;
    align-items: center;
    padding: 3px 0;
    border-bottom: 1px solid #2c2c2c;
    box-shadow: 0 1px #555;
}

.dock-group .grip {
    margin-bottom: 3px;
}

.dock-group button {
    width: 34px;
    height: 26px;
}

.dock-group svg {
    width: 20px;
    height: 20px;
    fill: #bdbdbd;
}

/* floating panels */
.panel {
    position: absolute;
    display: flex;
    flex-direction: column;
    background: #484848;
    border: 1px solid #282828;
    border-radius: 4px 4px 0 0;
    box-shadow: 0 0 4px rgba(0, 0, 0, 0.4);
}

.panel-head {
    display: flex;
    justify-content: flex-end;
    align-items: center;
    gap: 9px;
    height: 12px;
    padding-right: 5px;
    background: linear-gradient(#353535, #292929);
    border-radius: 3px 3px 0 0;
}

.panel-tabs {
    display: flex;
    height: 17px;
    background: #303030;
    border-top: 1px solid #3e3e3e;
    border-bottom: 1px solid #555;
    color: #8f8f8f;
    font-weight: 700;
}

.panel-tabs button {
    padding: 0 5px 2px;
    border-right: 1px solid #282828;
}

.panel-tabs .cut {
    width: 30px;
    padding: 0 0 2px;
}

.panel-tabs .open {
    height: 16px;
    padding-bottom: 3px;
    background: #484848;
    color: #dedede;
}

.panel-tabs .panel-menu {
    margin-left: auto;
    padding: 0 4px;
    border: 0;
}

.pathfinder {
    left: 85px;
    top: 203px;
    width: 218px;
}

.panel-body {
    padding: 5px 5px 5px 4px;
}

.panel-body h3 {
    margin: 0;
    font-size: 9px;
    font-weight: normal;
}

.shape-row {
    display: flex;
    align-items: center;
    gap: 10px;
    height: 34px;
}

.shape-row button {
    width: 24px;
}

.shape-row .expand {
    width: 71px;
    margin-left: auto;
    color: #7d7d7d;
    border-color: #333;
    background: #4f4f4f;
}

.shape-row svg, .finder-row svg {
    width: 14px;
    height: 14px;
}

.finder-row {
    display: flex;
    gap: 7px;
    padding: 5px 0 0 1px;
}

.finder-row button {
    width: 28px;
    height: 23px;
}

.finder-row .active {
    background: linear-gradient(#6c6c6c, #5c5c5c);
    border: 1px solid #303030;
}

.tooltip {
    position: absolute;
    left: 60px;
    top: 122px;
    padding: 1px 5px;
    border: 1px solid #777;
    border-radius: 2px;
    background: linear-gradient(#fff, #e4e5f0);
    box-shadow: 2px 2px 2px rgba(0, 0, 0, 0.5);
    color: #555;
    font-size: 11px;
    line-height: 15px;
}

.layers {
    right: 0;
    top: 83px;
    bottom: 38px;
    width: 476px;
}

.layer-list {
    flex: 1;
    margin: 3px 5px 0;
    border: 1px solid #2c2c2c;
    border-top-color: #3a3a3a;
}

.layer {
    position: relative;
    display: flex;
    align-items: center;
    height: 20px;
    background: #5b6576;
    border-bottom: 1px solid #3c4350;
}

.layer::after {
    content: "";
    position: absolute;
    top: 0;
    right: 0;
    border: 2px solid transparent;
    border-top-color: #ddd;
    border-right-color: #ddd;
}

.cell {
    width: 20px;
    height: 19px;
    border-right: 1px solid #3c4350;
}

.color {
    width: 5px;
    height: 19px;
    margin-right: 5px;
    background: #4f7dfb;
    border-right: 1px solid #2c3340;
}

.thumbnail {
    margin: 0 5px 0 10px;
}

.layer-name {
    flex: 1;
}

.target {
    width: 33px;
    height: 19px;
    justify-content: flex-start;
    padding-left: 5px;
    border-left: 1px solid #3c4350;
}

.layers-foot {
    display: flex;
    align-items: center;
    height: 19px;
    padding: 0 2px 0 5px;
}

.foot-icons {
    display: flex;
    gap: 12px;
    margin: 0 15px 0 auto;
}

.foot-icons button, .foot-icons svg {
    width: 12px;
    height: 12px;
}

.resize {
    align-self: flex-end;
}

.panel-edge {
    display: flex;
    justify-content: center;
    height: 7px;
    padding-top: 1px;
    border-top: 1px solid #2c2c2c;
}

/* taskbar */
.taskbar {
    display: flex;
    height: 36px;
    background: linear-gradient(#12181c, #070c10);
    border-top: 1px solid #353b3f;
}

.start {
    width: 36px;
    margin: 0 14px 0 7px;
}

.apps {
    display: flex;
    gap: 4px;
}

.apps button {
    width: 54px;
    height: 35px;
}

.apps .running {
    border: 1px solid #8b9093;
    border-radius: 3px;
    background: linear-gradient(150deg, #94979a, #3d4245 45%, #1f2426 46%, #383c3f);
}

.apps .current {
    padding-bottom: 4px;
    border-color: #d0d4d6;
    background: linear-gradient(150deg, #c9cccd, #94999b 50%, #85898b 51%, #aeb2b4);
}

.ai-tile {
    width: 27px;
    height: 25px;
    border: 2px solid #f7a120;
    background: #2f1e0c;
    color: #f7a120;
    font-size: 15px;
    font-weight: bold;
    line-height: 20px;
}

.tray {
    display: flex;
    align-items: center;
    gap: 10px;
    margin-left: auto;
}

.lang {
    margin-right: 4px;
    padding-bottom: 6px;
    font-size: 11px;
}

.tray .tri {
    margin-right: 3px;
    border-width: 0 3px 4px;
}

.clock {
    width: 50px;
    margin: 0 2px 0 6px;
    display: flex;
    flex-direction: column;
    align-items: center;
    color: #fff;
    font-size: 10px;
    line-height: 16px;
}

.peek {
    width: 13px;
    height: 35px;
    border: 1px solid #63696c;
    background: linear-gradient(150deg, #74797c, #1c2124 45%);
}
```
